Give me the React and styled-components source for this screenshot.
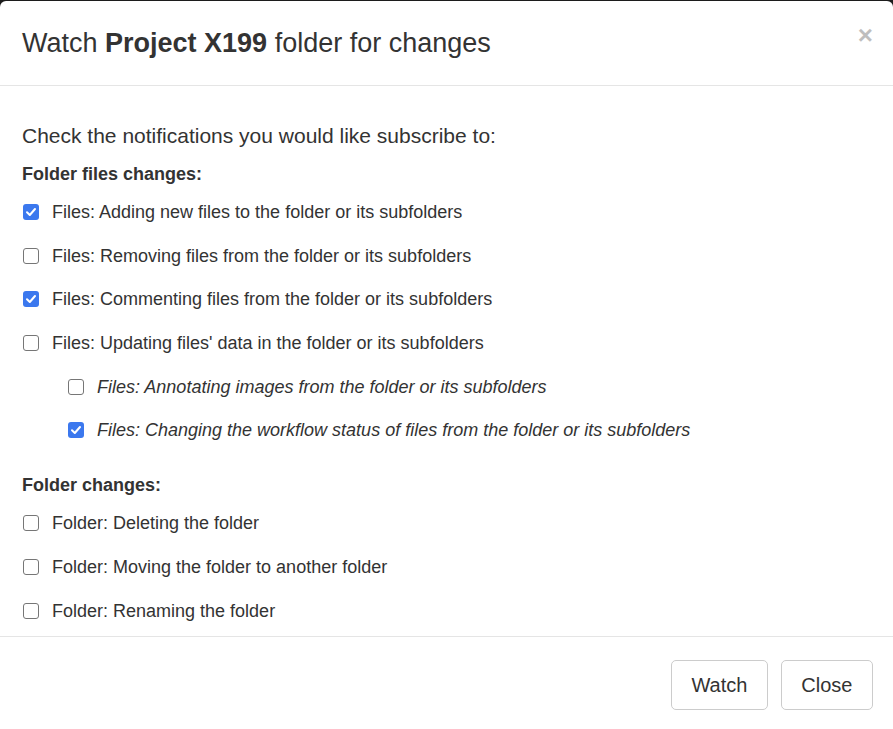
import React from "react";
import styled, { createGlobalStyle } from "styled-components";

const Global = createGlobalStyle`
  html, body { margin: 0; padding: 0; background: #1c1c1c; }
  body { padding-top: 1px; font-family: "Liberation Sans", Arial, sans-serif; color: #333; }
  * { box-sizing: border-box; }
`;

const Modal = styled.div`
  background: #fff;
  border-radius: 6px 6px 0 0;
  min-height: 728px;
  display: flex;
  flex-direction: column;
`;

const Header = styled.div`
  display: flex;
  align-items: center;
  justify-content: space-between;
  padding: 25px 20px 25px 22px;
  border-bottom: 1px solid #e5e5e5;
`;

const Title = styled.h4`
  margin: 0;
  font-size: 27px;
  font-weight: normal;
  line-height: 34px;
  color: #333;
  b { font-weight: bold; }
`;

const CloseX = styled.button`
  border: 0;
  background: none;
  padding: 0;
  margin-top: -16px;
  font-family: "Liberation Sans", Arial, sans-serif;
  font-size: 26px;
  font-weight: bold;
  line-height: 1;
  color: #000;
  opacity: 0.25;
  cursor: pointer;
`;

const Body = styled.div`
  padding: 37px 22px 4px 22px;
`;

const Intro = styled.p`
  margin: 0 0 14px;
  font-size: 21px;
  line-height: 26px;
  color: #333;
`;

const Section = styled.div`
  margin-top: ${(p) => (p.first ? "0" : "22px")};
`;

const SectionTitle = styled.div`
  font-size: 18px;
  font-weight: bold;
  line-height: 22px;
  margin-bottom: 5.5px;
`;

const Row = styled.label`
  display: flex;
  align-items: center;
  gap: 13px;
  height: 43.6px;
  padding-left: ${(p) => (p.indent ? "46px" : "1px")};
  font-size: 18px;
  font-style: ${(p) => (p.indent ? "italic" : "normal")};
  line-height: 22px;
  color: #333;
  cursor: pointer;
`;

const Box = styled.span`
  flex: none;
  width: 16px;
  height: 16px;
  border-radius: 3px;
  border: ${(p) => (p.checked ? "none" : "1px solid #767676")};
  background: ${(p) => (p.checked ? "#3b78ee" : "#fff")};
  display: flex;
  align-items: center;
  justify-content: center;
`;

const Footer = styled.div`
  border-top: 1px solid #e5e5e5;
  display: flex;
  justify-content: flex-end;
  gap: 13px;
  padding: 23px 20px 19px;
`;

const Button = styled.button`
  height: 50px;
  padding: 0 19.5px;
  font-family: "Liberation Sans", Arial, sans-serif;
  font-size: 20px;
  color: #333;
  background: #fff;
  border: 1px solid #ccc;
  border-radius: 5px;
  cursor: pointer;
`;

function Check({ checked }) {
  return (
    <Box checked={checked}>
      {checked && (
        <svg width="12" height="12" viewBox="0 0 12 12">
          <path d="M2 6.3 L4.8 9 L10 3" fill="none" stroke="#fff" strokeWidth="2" strokeLinecap="round" strokeLinejoin="round" />
        </svg>
      )}
    </Box>
  );
}

const fileItems = [
  { text: "Files: Adding new files to the folder or its subfolders", checked: true },
  { text: "Files: Removing files from the folder or its subfolders", checked: false },
  { text: "Files: Commenting files from the folder or its subfolders", checked: true },
  { text: "Files: Updating files' data in the folder or its subfolders", checked: false },
  { text: "Files: Annotating images from the folder or its subfolders", checked: false, indent: true },
  { text: "Files: Changing the workflow status of files from the folder or its subfolders", checked: true, indent: true },
];

const folderItems = [
  { text: "Folder: Deleting the folder", checked: false },
  { text: "Folder: Moving the folder to another folder", checked: false },
  { text: "Folder: Renaming the folder", checked: false },
];

export default function App() {
  return (
    <>
      <Global />
      <Modal>
        <Header>
          <Title>
            Watch <b>Project X199</b> folder for changes
          </Title>
          <CloseX aria-label="Close">×</CloseX>
        </Header>
        <Body>
          <Intro>Check the notifications you would like subscribe to:</Intro>
          <Section first>
            <SectionTitle>Folder files changes:</SectionTitle>
            {fileItems.map((it) => (
              <Row key={it.text} indent={it.indent}>
                <Check checked={it.checked} />
                {it.text}
              </Row>
            ))}
          </Section>
          <Section>
            <SectionTitle>Folder changes:</SectionTitle>
            {folderItems.map((it) => (
              <Row key={it.text}>
                <Check checked={it.checked} />
                {it.text}
              </Row>
            ))}
          </Section>
        </Body>
        <Footer>
          <Button>Watch</Button>
          <Button>Close</Button>
        </Footer>
      </Modal>
    </>
  );
}
